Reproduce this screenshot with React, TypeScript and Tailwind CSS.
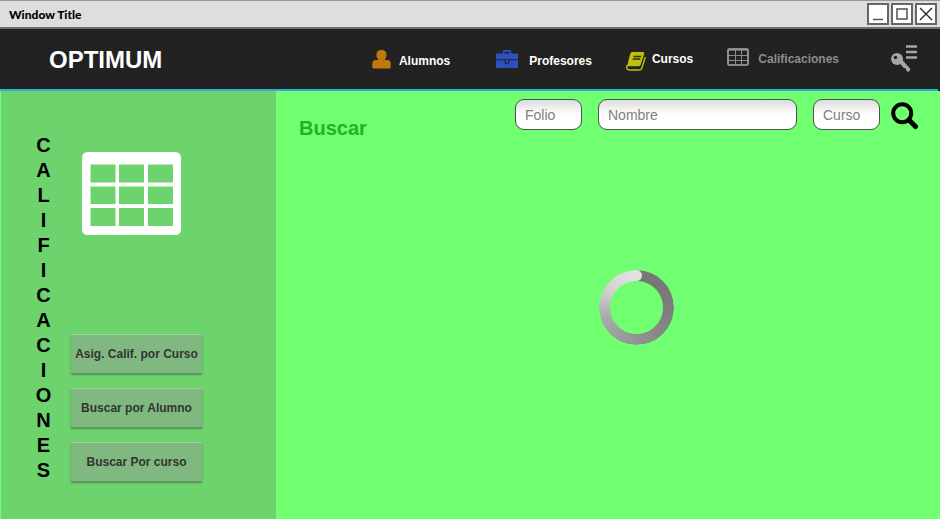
import React from "react";

function PersonIcon() {
  return (
    <svg width="19" height="19" viewBox="0 0 19 19" fill="#c0780c" aria-hidden="true">
      <rect x="4.500" y="0" width="10" height="10" rx="4.600" />
      <path d="M6 8h7v2h2q3.700.2 3.700 3.500v3.700q0 1.300-1.300 1.300H1.600Q.3 18.500.3 17.200v-3.700Q.3 10.200 4 10h2z" />
    </svg>
  );
}

function BriefcaseIcon() {
  return (
    <svg width="22" height="18" viewBox="0 0 22 18" aria-hidden="true">
      <path d="M7.600 4V1.800q0-.9.9-.9h5q.9 0 .9.9V4" fill="none" stroke="#2c52c0" strokeWidth="1.600" />
      <path d="M1 3.500h20q1 0 1 1v4.700H0V4.500q0-1 1-1zM0 10.300h22V17q0 1-1 1H1q-1 0-1-1z" fill="#2c52c0" />
      <path d="M9.200 9.800v2.400q0 1.600 1.800 1.600t1.800-1.600V9.800" fill="#2c52c0" stroke="#1d2744" strokeWidth="1.300" />
    </svg>
  );
}

function BookIcon() {
  return (
    <svg width="20" height="19" viewBox="0 0 20 19" aria-hidden="true">
      <path d="M6.500 0h10.300c1.200 0 1.700.7 1.400 1.800l-3.500 10.800c-.4 1.100-1 1.600-2.100 1.600H1.200C2.300 9.500 3.200 5.500 4.300 1.800 4.700.6 5.300 0 6.500 0z" fill="#c3bd0b" />
      <path d="M1.600 13C.6 14.200.5 15.600 1 16.600c.4.900 1 1.400 2 1.400h10.400c1.200 0 1.900-.5 2.300-1.600l3.600-11.400" fill="none" stroke="#c3bd0b" strokeWidth="1.400" />
      <path d="M7.500 4.500h7.600M6.700 7h7.600" stroke="#33330f" strokeWidth="1.300" />
    </svg>
  );
}

function SmallGridIcon() {
  return (
    <svg width="22" height="18" viewBox="0 0 22 18" fill="none" aria-hidden="true">
      <path d="M1 7.500h20M1 12.500h20M8.500 2v15M14.500 2v15" stroke="#8a8a8a" />
      <rect x="1" y="1" width="20" height="16" rx="1" stroke="#a8a8a8" strokeWidth="1.600" />
      <path d="M1 2h20" stroke="#a8a8a8" />
    </svg>
  );
}

function KeyMenuIcon() {
  return (
    <svg width="26" height="28" viewBox="0 0 26 28" aria-hidden="true">
      <path d="M15 1.500h11M15 7h11M15 12.500h11" stroke="#a6a6a6" strokeWidth="2.400" />
      <circle cx="6" cy="14" r="7" fill="#222" />
      <circle cx="6" cy="14" r="6" fill="#a6a6a6" />
      <circle cx="4.500" cy="12.500" r="1.700" fill="#222" />
      <path d="M8 17.500l3-3 8 9q.6 3-2.500 3.200L15 25v-1.800h-2z" fill="#a6a6a6" />
    </svg>
  );
}

function BigGridIcon() {
  return (
    <svg width="99" height="83" viewBox="0 0 99 83" aria-hidden="true">
      <path
        fill="#fff"
        fillRule="evenodd"
        d="M6 0h87q6 0 6 6v71q0 6-6 6H6q-6 0-6-6V6q0-6 6-6zM8.500 12.500v18h25v-18zm28.500 0v18h25v-18zm29 0v18h25v-18zM8.500 34.500v17.500h25V34.500zm28.500 0v17.500h25V34.500zm29 0v17.500h25V34.500zM8.500 56v18h25V56zm28.500 0v18h25V56zm29 0v18h25V56z"
      />
    </svg>
  );
}

function SearchIcon() {
  return (
    <svg width="28" height="28" viewBox="0 0 28 28" fill="none" stroke="#000" aria-hidden="true">
      <circle cx="11.200" cy="11.200" r="9" strokeWidth="4" />
      <path d="M18 18l6.500 6.500" strokeWidth="5" strokeLinecap="round" />
    </svg>
  );
}

const windowButton = "flex size-[22px] items-center justify-center border-2 border-[#666] bg-white";

function TitleBar() {
  return (
    <div className="flex h-[29px] items-center justify-between border-t border-b-2 border-t-[#999] border-b-[#6e6e6e] bg-[#dedede] pr-[3px] pl-[9px]">
      <span className="pt-0.5 font-[Lato,sans-serif] text-xs font-black text-black">Window Title</span>
      <div className="flex gap-0.5">
        <button type="button" aria-label="Minimizar" className={windowButton}>
          <svg width="18" height="18" stroke="#555" strokeWidth="1.500" aria-hidden="true">
            <path d="M4 14.500h10" />
          </svg>
        </button>
        <button type="button" aria-label="Maximizar" className={windowButton}>
          <svg width="18" height="18" fill="none" stroke="#666" strokeWidth="1.700" aria-hidden="true">
            <rect x="4" y="4" width="10" height="10" />
          </svg>
        </button>
        <button type="button" aria-label="Cerrar" className={windowButton}>
          <svg width="18" height="18" stroke="#222" strokeWidth="1.300" aria-hidden="true">
            <path d="M3 3l12 12M15 3L3 15" />
          </svg>
        </button>
      </div>
    </div>
  );
}

function NavBar() {
  return (
    <header className="bg-[#222]">
      <div className="flex h-15 items-center pr-[23px] pl-[49px]">
        <span className="grow pt-0.5 text-2xl font-bold text-white">OPTIMUM</span>
        <nav className="flex items-center text-xs font-bold text-white">
          <a href="#alumnos" className="mr-[46px] flex items-center gap-2">
            <PersonIcon />
            <span className="pt-1">Alumnos</span>
          </a>
          <a href="#profesores" className="mr-[34px] flex items-center gap-[11px]">
            <BriefcaseIcon />
            <span className="pt-1">Profesores</span>
          </a>
          <a href="#cursos" className="mr-[34px] flex items-center gap-1.5">
            <span className="pt-1">
              <BookIcon />
            </span>
            <span>Cursos</span>
          </a>
          <a href="#calificaciones" className="mr-[52px] flex items-center gap-[9px] text-[#8c8c8c]">
            <span className="pb-1">
              <SmallGridIcon />
            </span>
            <span>Calificaciones</span>
          </a>
        </nav>
        <button type="button" aria-label="Acceso">
          <KeyMenuIcon />
        </button>
      </div>
      <div className="mr-0.5 h-0.5 bg-[#35a9dc]" />
    </header>
  );
}

const actions = ["Asig. Calif. por Curso", "Buscar por Alumno", "Buscar Por curso"];

function Sidebar() {
  return (
    <aside className="flex w-[276px] shrink-0 gap-5 border-l border-[#70ff70] bg-[#6dd36d] pl-[35px]">
      <h1 aria-label="Calificaciones" className="flex w-[15px] flex-col items-center pt-[42px] text-xl leading-[25px] font-bold text-black">
        {"CALIFICACIONES".split("").map((letter, i) => (
          <span key={i}>{letter}</span>
        ))}
      </h1>
      <div className="flex flex-col pt-[61px]">
        <div className="pl-[11px]">
          <BigGridIcon />
        </div>
        <div className="flex flex-col gap-3.5 pt-[99px]">
          {actions.map((label) => (
            <button
              key={label}
              type="button"
              className="h-10 w-[131px] border-t border-b border-t-[#a2d0a2] border-b-[#5f8f60] bg-[#80b980] text-xs font-bold whitespace-nowrap text-[#333] shadow-[0_1px_2px_rgba(0,0,0,0.3)]"
            >
              {label}
            </button>
          ))}
        </div>
      </div>
    </aside>
  );
}

const field =
  "h-[31px] rounded-[9px] border border-[#505050] bg-linear-to-b from-[#dcdcdc] to-white to-50% px-[9px] text-sm text-black placeholder:text-[#808080]";

function Spinner() {
  return (
    <div role="status" aria-label="Cargando" className="relative size-[75px]">
      <div className="size-full rounded-full bg-[conic-gradient(#747474,#7c7c7c_25%,#929292_50%,#aaaaaa_70%,#d2d2d2_84%,#e2e2e2)] mask-[radial-gradient(circle,transparent_26px,black_27px)]" />
      <span className="absolute top-0 left-8 size-[11px] rounded-full bg-[#e2e2e2]" />
    </div>
  );
}

function SearchPanel() {
  return (
    <main className="min-w-0 grow bg-[#70ff70]">
      <form className="flex items-start pt-2 pr-[21px] pl-[23px]" onSubmit={(e) => e.preventDefault()}>
        <h2 className="grow pt-[15px] text-xl font-bold text-[#20b420]">Buscar</h2>
        <div className="flex gap-4">
          <input aria-label="Folio" placeholder="Folio" className={`${field} w-[67px]`} />
          <input aria-label="Nombre" placeholder="Nombre" className={`${field} w-[199px]`} />
          <input aria-label="Curso" placeholder="Curso" className={`${field} w-[67px]`} />
        </div>
        <button type="submit" aria-label="Buscar" className="ml-[11px] pt-[3px]">
          <SearchIcon />
        </button>
      </form>
      <div className="flex justify-center pt-32 pl-[57px]">
        <Spinner />
      </div>
    </main>
  );
}

export default function App() {
  return (
    <div className="flex min-h-screen flex-col font-['Liberation_Sans',Arial,sans-serif]">
      <TitleBar />
      <NavBar />
      <div className="flex grow">
        <Sidebar />
        <SearchPanel />
      </div>
    </div>
  );
}
